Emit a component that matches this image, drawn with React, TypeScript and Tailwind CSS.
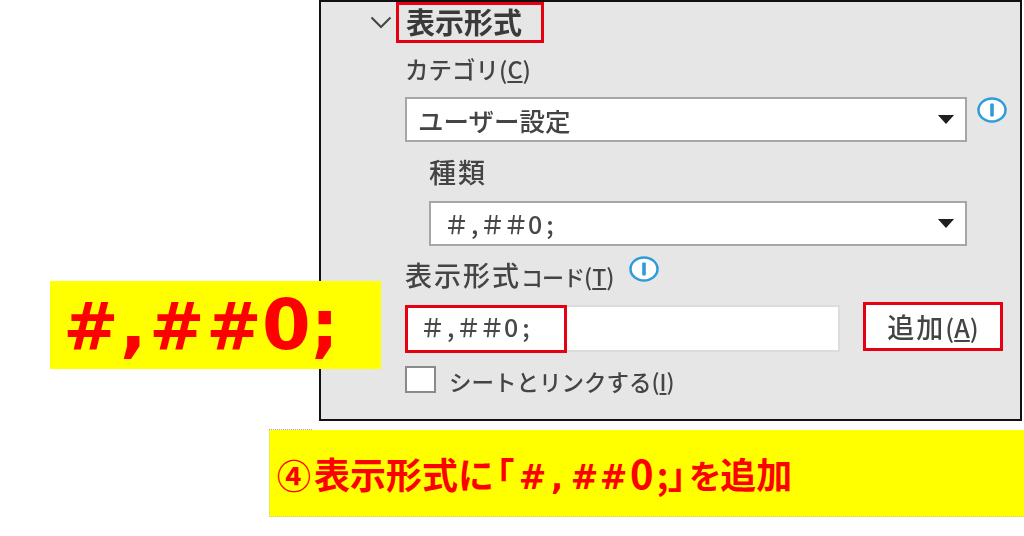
const jp = "font-['Noto_Sans_CJK_JP','Noto_Sans',sans-serif]";
const dejavu = "font-['DejaVu_Sans',sans-serif]";
const palt = "[font-feature-settings:'palt']";
const label = 'leading-none font-medium text-[#444] blur-[0.4px] whitespace-nowrap';

function InfoIcon({ className }: { className: string }) {
    return (
        <svg viewBox="0 0 30 26" className={className}>
            <ellipse cx="15" cy="13" rx="13.5" ry="11.5" fill="#fff" stroke="#2f9bd8" strokeWidth="2.5" />
            <rect x="13.2" y="6.5" width="3.6" height="13" rx="1" fill="#2f9bd8" />
        </svg>
    );
}

function Caret() {
    return (
        <svg viewBox="0 0 18 10" className="w-[18px] h-[9px] shrink-0">
            <path d="M0 0H18L9 10Z" fill="#1f1f1f" />
        </svg>
    );
}

// box keeps the glyph centred while setting its own advance
function Cell({ className, children }: { className: string; children: string }) {
    return <span className={`flex justify-center ${className}`}>{children}</span>;
}

function Code() {
    return (
        <span className={`flex items-baseline text-[25px] leading-none font-medium text-[#484848] blur-[0.4px] ${palt}`}>
            <Cell className="w-[25px]">＃</Cell>
            <span className="w-[12px] pl-[2px]">,</span>
            <Cell className="w-[23px]">＃</Cell>
            <Cell className="w-[24px]">＃</Cell>
            <span>0</span>
            <span className="ml-[4px]">;</span>
        </span>
    );
}

export default function App() {
    return (
        <div className={`relative w-[1024px] h-[536px] bg-white overflow-hidden ${jp}`}>
            <section className="ml-[319px] w-[703px] h-[421px] bg-[#e6e6e6] border-2 border-[#111] pl-[84px]">
                {/* header */}
                <div className="relative h-[40px]">
                    <svg viewBox="0 0 22 13" className="absolute left-[-35px] top-[14px] w-[22px] h-[13px]">
                        <path d="M1.5 1.5L11 11L20.5 1.5" fill="none" stroke="#444" strokeWidth="2" />
                    </svg>
                    <div className="absolute left-[-9px] top-0 w-[148px] h-[41px] border-[3px] border-[#e60012] flex items-center pl-[7px] pb-[3px]">
                        <span className="text-[29px] leading-none font-bold text-[#3a3a3a] blur-[0.4px] whitespace-nowrap">表示形式</span>
                    </div>
                </div>

                <div className="h-[55px] flex items-center">
                    <span className={`text-[23.5px] ${label}`}>
                        カテゴリ(<span className="underline">C</span>)
                    </span>
                </div>

                <div className="flex gap-[10px]">
                    <div className="w-[562px] h-[45px] bg-white border-2 border-[#a6a6a6] flex items-center justify-between pl-[11px] pr-[10px]">
                        <span className={`text-[25.5px] ${label}`}>ユーザー設定</span>
                        <Caret />
                    </div>
                    <InfoIcon className="w-[30px] h-[26px]" />
                </div>

                <div className="h-[59px] flex items-center pl-[24px]">
                    <span className={`text-[27px] tracking-[2px] ${label}`}>種類</span>
                </div>

                <div className="ml-[24px] w-[538px]">
                    <div className="h-[45px] bg-white border-2 border-[#a6a6a6] flex items-center justify-between pl-[13px] pr-[10px]">
                        <Code />
                        <Caret />
                    </div>
                </div>

                <div className="h-[59px] flex items-center gap-[15px] pb-[2px]">
                    <span className={`flex items-baseline ${label}`}>
                        <span className="text-[27px] tracking-[2px]">表示形式</span>
                        <span className="text-[22px] tracking-[-1px]">コード</span>
                        <span className="text-[23px]">
                            (<span className="underline">T</span>)
                        </span>
                    </span>
                    <InfoIcon className="w-[30px] h-[26px] -mt-[12px]" />
                </div>

                <div className="flex items-center gap-[23px]">
                    <div className="relative w-[435px] h-[47px] bg-white border-2 border-[#dcdcdc]">
                        <div className="absolute left-[-2px] top-[-2px] w-[162px] h-[48px] border-[3px] border-[#e60012] flex items-center pl-[12px] pb-[5px]">
                            <Code />
                        </div>
                    </div>
                    <button
                        type="button"
                        className="w-[140px] h-[49px] -mt-[4px] bg-white border-[3px] border-[#e60012] flex items-center justify-center"
                    >
                        <span className={`flex items-baseline ${label}`}>
                            <span className="text-[27px] tracking-[2px]">追加</span>
                            <span className="text-[25px]">
                                (<span className="underline">A</span>)
                            </span>
                        </span>
                    </button>
                </div>

                <div className="flex items-center gap-[13px] mt-[14px]">
                    <div className="w-[31px] h-[27px] bg-white border-2 border-[#8a8a8a]"></div>
                    <span className={`text-[22.5px] pt-[3px] ${label}`}>
                        シートとリンクする(<span className="underline">I</span>)
                    </span>
                </div>
            </section>

            {/* callout over the panel */}
            <div className={`absolute left-[50px] top-[281px] w-[331px] h-[88px] bg-[#ffff00] flex items-center pl-[12px] ${dejavu}`}>
                <span className="flex items-baseline font-bold text-[70px] leading-none text-[#ff0000] whitespace-nowrap">
                    <Cell className="w-[58px] text-[66px]">#</Cell>
                    <span className="w-[28px]">,</span>
                    <Cell className="w-[58px] text-[66px]">#</Cell>
                    <Cell className="w-[56px] text-[66px]">#</Cell>
                    <span>0;</span>
                </span>
            </div>

            <div className="relative ml-[269px] mt-[9px] w-[755px] h-[87px] bg-[#ffff00] border-l border-b border-dotted border-[#cfcf9a] flex items-center pl-[7px]">
                <div className="absolute left-[-1px] top-[-1px] w-[43px] border-t border-dotted border-[#aaa]"></div>
                <span className="flex items-baseline font-bold text-[36px] leading-none text-[#ff0000] whitespace-nowrap">
                    <span className="w-[37px] text-[34px]">④</span>
                    <span>表示形式に</span>
                    <span className={`w-[20px] flex justify-end ${palt}`}>「</span>
                    <Cell className={`w-[37px] text-[33px] ${dejavu}`}>#</Cell>
                    <span className={`w-[19px] text-[32px] ${dejavu}`}>,</span>
                    <Cell className={`w-[29px] text-[33px] ${dejavu}`}>#</Cell>
                    <Cell className={`w-[29px] text-[33px] ${dejavu}`}>#</Cell>
                    <span className="text-[40px] pl-[2px]">0</span>
                    <span className="ml-[3px]">;</span>
                    <span className={`w-[21px] ${palt}`}>」</span>
                    <Cell className={`w-[31px] text-[33px] ${palt}`}>を</Cell>
                    <span>追加</span>
                </span>
            </div>
        </div>
    );
}
